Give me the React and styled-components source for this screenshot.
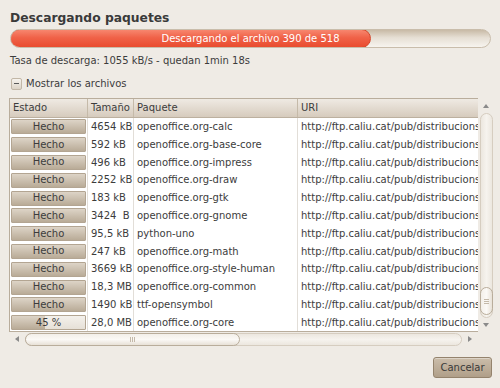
import React from "react";
import styled, { createGlobalStyle } from "styled-components";

const GlobalStyle = createGlobalStyle`
  html, body { margin: 0; padding: 0; background: #efebe5; }
  body {
    font-family: "DejaVu Sans", "Noto Sans", sans-serif;
    font-size: 10px;
    color: #3c3c3c;
  }
`;

const COLS = "78px 46px 164px 1fr";
const URI = "http://ftp.caliu.cat/pub/distribucions";

const rows = [
  ["done", "4654 kB", "openoffice.org-calc"],
  ["done", "592 kB", "openoffice.org-base-core"],
  ["done", "496 kB", "openoffice.org-impress"],
  ["done", "2252 kB", "openoffice.org-draw"],
  ["done", "183 kB", "openoffice.org-gtk"],
  ["done", "3424  B", "openoffice.org-gnome"],
  ["done", "95,5 kB", "python-uno"],
  ["done", "247 kB", "openoffice.org-math"],
  ["done", "3669 kB", "openoffice.org-style-human"],
  ["done", "18,3 MB", "openoffice.org-common"],
  ["done", "1490 kB", "ttf-opensymbol"],
  [45, "28,0 MB", "openoffice.org-core"],
];

const Dialog = styled.div`
  width: 500px;
  height: 388px;
  box-sizing: border-box;
  padding: 7px 6px 0 9px;
  display: flex;
  flex-direction: column;
`;

const Title = styled.div`
  font-weight: bold;
  font-size: 12.3px;
  line-height: 22px;
  height: 22px;
  margin-left: 1px;
  color: #3a3a3a;
`;

const Bar = styled.div`
  position: relative;
  height: 19px;
  margin: 0 3px 0 1px;
  box-sizing: border-box;
  border-radius: 10px;
  border: 1px solid #c9bdab;
  background: linear-gradient(#c8baa6, #e6dfd4 45%, #f7f4ef);
  overflow: hidden;
`;

const Fill = styled.div`
  border-radius: 10px;
  box-sizing: border-box;
  border: 1px solid #d5472b;
  margin: -1px 0 0 -1px;
  height: 19px;
  background: linear-gradient(#f7866e, #f06248 45%, #e94c2f);
`;

const BarLabel = styled.div`
  position: absolute;
  inset: 0;
  display: flex;
  align-items: center;
  justify-content: center;
  color: #ffffff;
  font-size: 10px;
`;

const Rate = styled.div`
  margin: 6px 0 0 1px;
  line-height: 14px;
  height: 14px;
`;

const Expander = styled.div`
  display: flex;
  align-items: center;
  gap: 4px;
  margin: 8px 0 0 2px;
  height: 15px;
`;

const MinusBox = styled.div`
  width: 11px;
  height: 12px;
  box-sizing: border-box;
  border: 1px solid #c2b7a7;
  border-radius: 2px;
  background: linear-gradient(#f6f3ee, #dcd3c6);
  display: flex;
  align-items: center;
  justify-content: center;
  &::after {
    content: "";
    width: 5px;
    height: 1px;
    background: #5a5a5a;
  }
`;

const Scrolled = styled.div`
  margin-top: 7px;
  display: grid;
  grid-template-columns: 469px 16px;
  grid-template-rows: 234px 14px;
`;

const Tree = styled.div`
  box-sizing: border-box;
  border: 1px solid #b9ad9c;
  border-right: none;
  background: #ffffff;
  overflow: hidden;
`;

const Header = styled.div`
  display: grid;
  grid-template-columns: ${COLS};
  height: 18px;
  background: linear-gradient(#efeae3, #d6cbbd);
  border-bottom: 1px solid #bcb09f;
`;

const HeadCell = styled.div`
  padding-left: ${(p) => p.$pad}px;
  line-height: 18px;
  border-right: 1px solid #c5baa9;
  white-space: nowrap;
  overflow: hidden;
  &:last-child { border-right: none; }
`;

const Row = styled.div`
  display: grid;
  grid-template-columns: ${COLS};
  height: 17.8px;
`;

const Cell = styled.div`
  padding-left: ${(p) => p.$pad}px;
  line-height: 17.8px;
  white-space: pre;
  overflow: hidden;
  border-right: 1px solid #e2ded8;
  &:last-child { border-right: none; }
`;

const StatusWrap = styled.div`
  padding: 1.4px 1px 1.4px 1px;
  box-sizing: border-box;
  border-right: 1px solid #e2ded8;
`;

const Status = styled.div`
  position: relative;
  height: 100%;
  box-sizing: border-box;
  border: 1px solid #b3a592;
  border-radius: 1px;
  background: ${(p) => (p.$done ? "linear-gradient(#ddd4c7, #b9ab97)" : "linear-gradient(#f4f1ec, #e6e0d7)")};
  overflow: hidden;
`;

const StatusFill = styled.div`
  height: 100%;
  background: linear-gradient(#ddd4c7, #b9ab97);
`;

const StatusText = styled.div`
  position: absolute;
  inset: 0;
  display: flex;
  align-items: center;
  justify-content: center;
  line-height: 1;
`;

const VScroll = styled.div`
  display: flex;
  flex-direction: column;
  align-items: center;
  padding: 0 1px 0 1px;
`;

const ArrowBox = styled.div`
  height: ${(p) => p.$h}px;
  width: ${(p) => p.$w || 14}px;
  display: flex;
  align-items: center;
  justify-content: center;
  flex: none;
`;

const VTrough = styled.div`
  flex: 1;
  width: 13px;
  box-sizing: border-box;
  border: 1px solid #d6cdc0;
  border-radius: 7px;
  background: linear-gradient(90deg, #ece7df, #f6f3ee 50%, #ece7df);
  display: flex;
  flex-direction: column;
`;

const VThumb = styled.div`
  margin: auto -1px 2px -1px;
  height: 28px;
  box-sizing: border-box;
  border: 1px solid #b9ad9b;
  border-radius: 7px;
  background: linear-gradient(90deg, #f3efe9, #fbf9f6 50%, #e8e1d7);
  display: flex;
  align-items: center;
  justify-content: center;
`;

const Grip = styled.div`
  display: flex;
  flex-direction: ${(p) => (p.$vertical ? "row" : "column")};
  gap: 1px;
  & > span {
    display: block;
    background: #c4b9a9;
    width: ${(p) => (p.$vertical ? "1px" : "5px")};
    height: ${(p) => (p.$vertical ? "5px" : "1px")};
  }
`;

const HScroll = styled.div`
  display: flex;
  align-items: center;
`;

const HTrough = styled.div`
  flex: 1;
  height: 13px;
  box-sizing: border-box;
  border: 1px solid #d6cdc0;
  border-radius: 7px;
  background: linear-gradient(#ece7df, #f6f3ee 50%, #ece7df);
  display: flex;
`;

const HThumb = styled.div`
  width: 215px;
  margin: -1px 0 -1px -1px;
  box-sizing: border-box;
  border: 1px solid #b9ad9b;
  border-radius: 7px;
  background: linear-gradient(#f3efe9, #fbf9f6 50%, #e8e1d7);
  display: flex;
  align-items: center;
  justify-content: center;
`;

const Corner = styled.div``;

const Footer = styled.div`
  display: flex;
  justify-content: flex-end;
  margin: 11px 2px 0 0;
`;

const Button = styled.button`
  width: 59px;
  height: 21px;
  box-sizing: border-box;
  border: 1px solid #94836d;
  border-radius: 3px;
  background: linear-gradient(#cbbdaa, #b09f89);
  font-family: "DejaVu Sans", sans-serif;
  font-size: 10px;
  color: #3a3a3a;
  padding: 0;
  box-shadow: inset 0 1px 0 rgba(255,255,255,0.35);
`;

const Tri = ({ dir }) => {
  const pts = {
    up: "0,4 3,0 6,4",
    down: "0,0 6,0 3,4",
    left: "4,0 4,6 0,3",
    right: "0,0 0,6 4,3",
  }[dir];
  const vert = dir === "up" || dir === "down";
  return (
    <svg width={vert ? 6 : 4} height={vert ? 4 : 6} viewBox={vert ? "0 0 6 4" : "0 0 4 6"}>
      <polygon points={pts} fill="#8a8a8a" />
    </svg>
  );
};

export default function App() {
  return (
    <>
      <GlobalStyle />
      <Dialog>
        <Title>Descargando paquetes</Title>
        <Bar>
          <Fill style={{ width: `${(390 / 518) * 100}%` }} />
          <BarLabel>Descargando el archivo 390 de 518</BarLabel>
        </Bar>
        <Rate>Tasa de descarga: 1055 kB/s - quedan 1min 18s</Rate>
        <Expander>
          <MinusBox />
          <span>Mostrar los archivos</span>
        </Expander>
        <Scrolled>
          <Tree>
            <Header>
              <HeadCell $pad={3}>Estado</HeadCell>
              <HeadCell $pad={3}>Tamaño</HeadCell>
              <HeadCell $pad={3}>Paquete</HeadCell>
              <HeadCell $pad={3}>URI</HeadCell>
            </Header>
            {rows.map(([st, size, pkg], i) => (
              <Row key={i}>
                <StatusWrap>
                  <Status $done={st === "done"}>
                    {st !== "done" && <StatusFill style={{ width: `${st}%` }} />}
                    <StatusText>{st === "done" ? "Hecho" : `${st} %`}</StatusText>
                  </Status>
                </StatusWrap>
                <Cell $pad={3}>{size}</Cell>
                <Cell $pad={3}>{pkg}</Cell>
                <Cell $pad={3}>{URI}</Cell>
              </Row>
            ))}
          </Tree>
          <VScroll>
            <ArrowBox $h={15}><Tri dir="up" /></ArrowBox>
            <VTrough>
              <VThumb>
                <Grip><span /><span /><span /></Grip>
              </VThumb>
            </VTrough>
            <ArrowBox $h={14}><Tri dir="down" /></ArrowBox>
          </VScroll>
          <HScroll>
            <ArrowBox $h={14} $w={16}><Tri dir="left" /></ArrowBox>
            <HTrough>
              <HThumb>
                <Grip $vertical><span /><span /><span /></Grip>
              </HThumb>
            </HTrough>
            <ArrowBox $h={14} $w={16}><Tri dir="right" /></ArrowBox>
          </HScroll>
          <Corner />
        </Scrolled>
        <Footer>
          <Button>Cancelar</Button>
        </Footer>
      </Dialog>
    </>
  );
}
